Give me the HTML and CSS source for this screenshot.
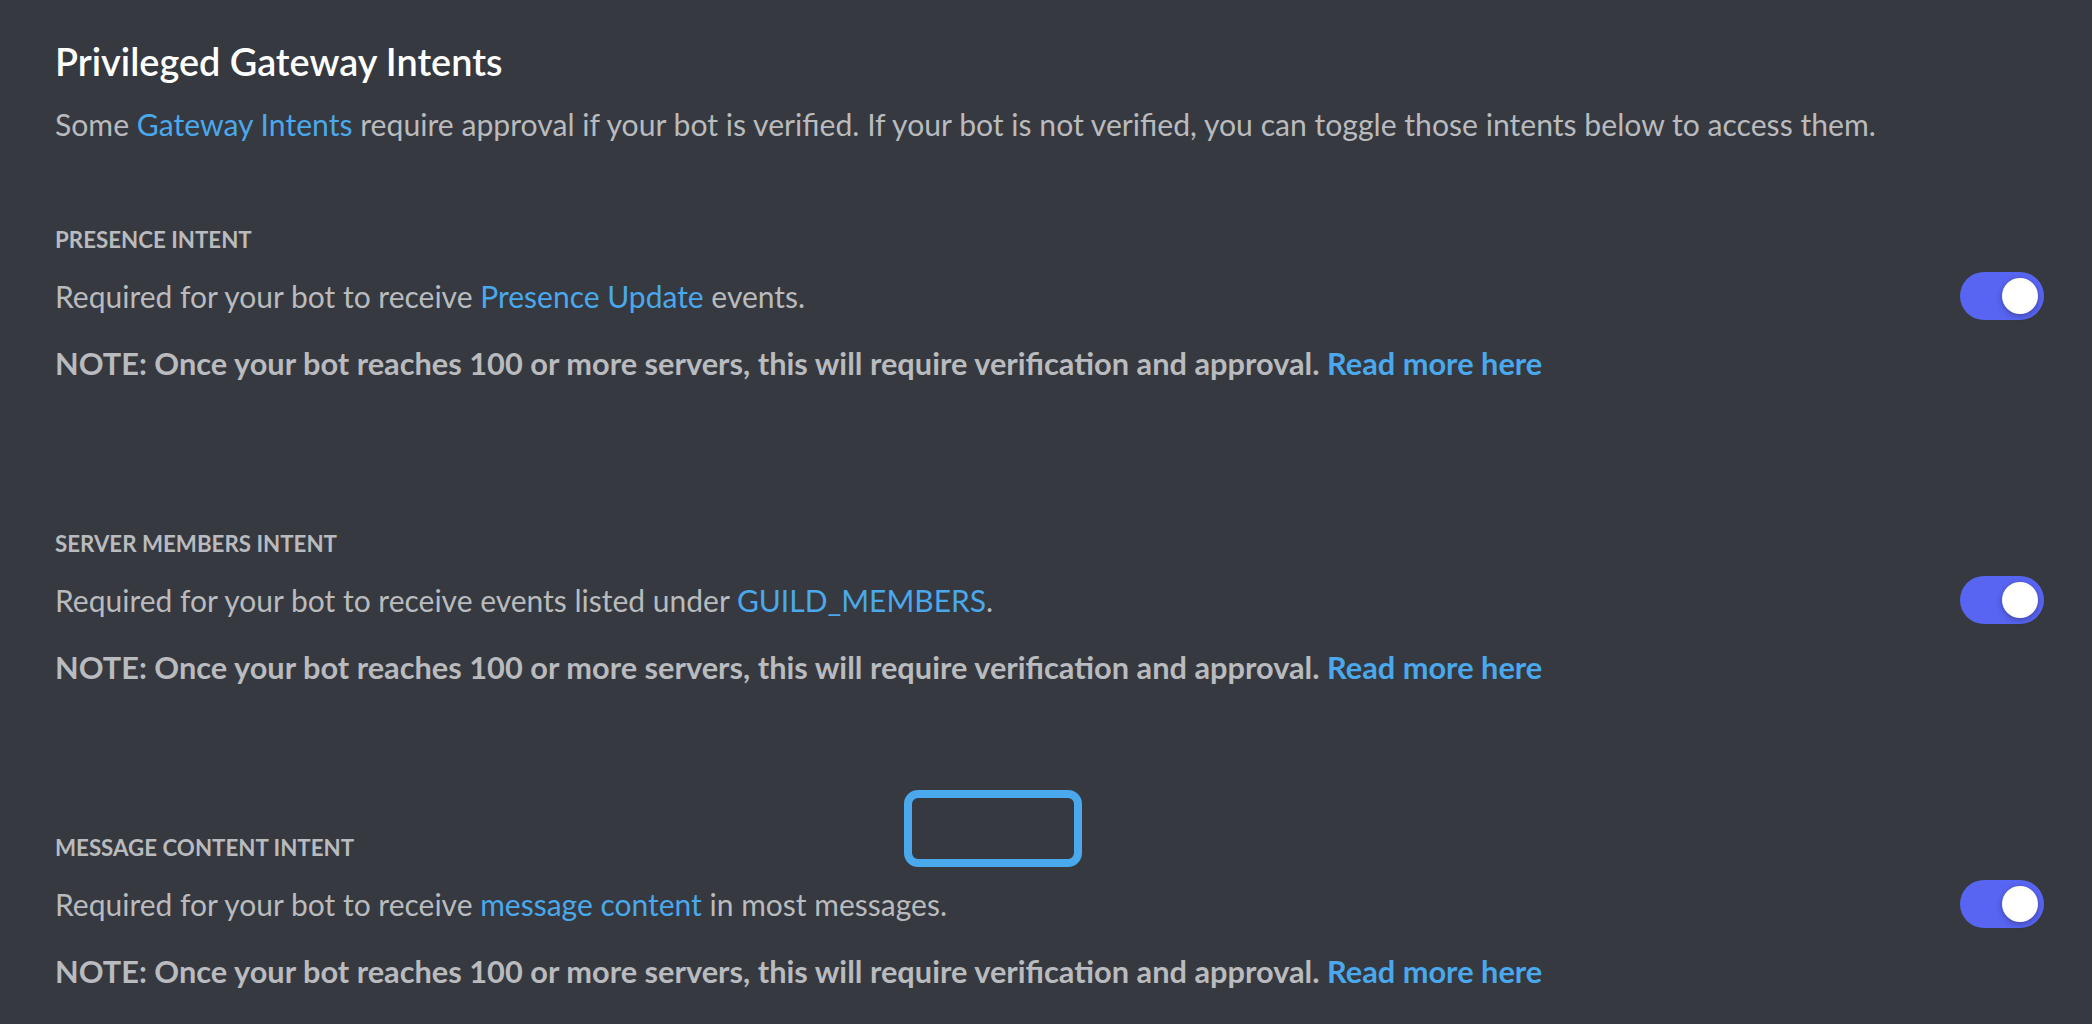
FILE: index.html
```html
<!DOCTYPE html>
<html>
<head>
<meta charset="utf-8">
<link rel="stylesheet" href="styles.css">
</head>
<body>
<main class="page">
  <header class="head">
    <h1 class="title">Privileged Gateway Intents</h1>
    <p class="sub">Some <a class="link">Gateway Intents</a> require approval if your bot is verified. If your bot is not verified, you can toggle those intents below to access them.</p>
  </header>

  <section class="intent">
    <h2 class="label">PRESENCE INTENT</h2>
    <div class="row">
      <p class="desc">Required for your bot to receive <a class="link">Presence Update</a> events.</p>
      <span class="toggle"><span class="knob"></span></span>
    </div>
    <p class="note">NOTE: Once your bot reaches 100 or more servers, this will require verification and approval. <a class="link">Read more here</a></p>
  </section>

  <section class="intent">
    <h2 class="label">SERVER MEMBERS INTENT</h2>
    <div class="row">
      <p class="desc">Required for your bot to receive events listed under <a class="link">GUILD_MEMBERS</a>.</p>
      <span class="toggle"><span class="knob"></span></span>
    </div>
    <p class="note">NOTE: Once your bot reaches 100 or more servers, this will require verification and approval. <a class="link">Read more here</a></p>
  </section>

  <section class="intent">
    <h2 class="label">MESSAGE CONTENT INTENT</h2>
    <div class="row">
      <p class="desc">Required for your bot to receive <a class="link">message content</a> in most messages.</p>
      <span class="toggle"><span class="knob"></span></span>
    </div>
    <p class="note">NOTE: Once your bot reaches 100 or more servers, this will require verification and approval. <a class="link">Read more here</a></p>
  </section>

  <div class="highlight"></div>
</main>
</body>
</html>
```

FILE: styles.css
```css
html, body {
  margin: 0;
  padding: 0;
  background: #36393f;
}
body {
  font-family: Lato, "Open Sans", sans-serif;
  color: #b9bbbe;
  height: 1024px;
  overflow: hidden;
}
.page {
  position: relative;
  padding: 40px 48px 0 55px;
  display: flex;
  flex-direction: column;
}
.head {
  display: flex;
  flex-direction: column;
  gap: 22px;
}
.title {
  margin: 0;
  font-size: 37.8px;
  line-height: 44px;
  font-weight: 600;
  color: #ffffff;
}
.sub {
  margin: 0;
  font-size: 30.15px;
  line-height: 36px;
}
.link {
  color: #4aa8ec;
  text-decoration: none;
}
.intent {
  display: flex;
  flex-direction: column;
  margin-top: 84px;
}
.intent + .intent {
  margin-top: 148px;
}
.label {
  margin: 0;
  font-size: 22.3px;
  line-height: 28px;
  font-weight: 700;
  color: #b9bbbe;
}
.row {
  margin-top: 18px;
  height: 48px;
  display: flex;
  align-items: center;
  justify-content: space-between;
}
.desc {
  margin: 0;
  font-size: 30px;
  line-height: 36px;
}
.note {
  margin: 26px 0 0;
  font-size: 30.75px;
  line-height: 36px;
  font-weight: 700;
}
.toggle {
  width: 84px;
  height: 48px;
  border-radius: 24px;
  background: #5865f2;
  display: flex;
  align-items: center;
  justify-content: flex-end;
  padding: 0 6px;
  box-sizing: border-box;
}
.knob {
  width: 36px;
  height: 36px;
  border-radius: 50%;
  background: #ffffff;
  box-shadow: 0 2px 6px rgba(0, 0, 0, 0.3);
}
.highlight {
  position: absolute;
  left: 904px;
  top: 790px;
  width: 178px;
  height: 77px;
  box-sizing: border-box;
  border: 8px solid #4aa8ec;
  border-radius: 14px;
}
```
